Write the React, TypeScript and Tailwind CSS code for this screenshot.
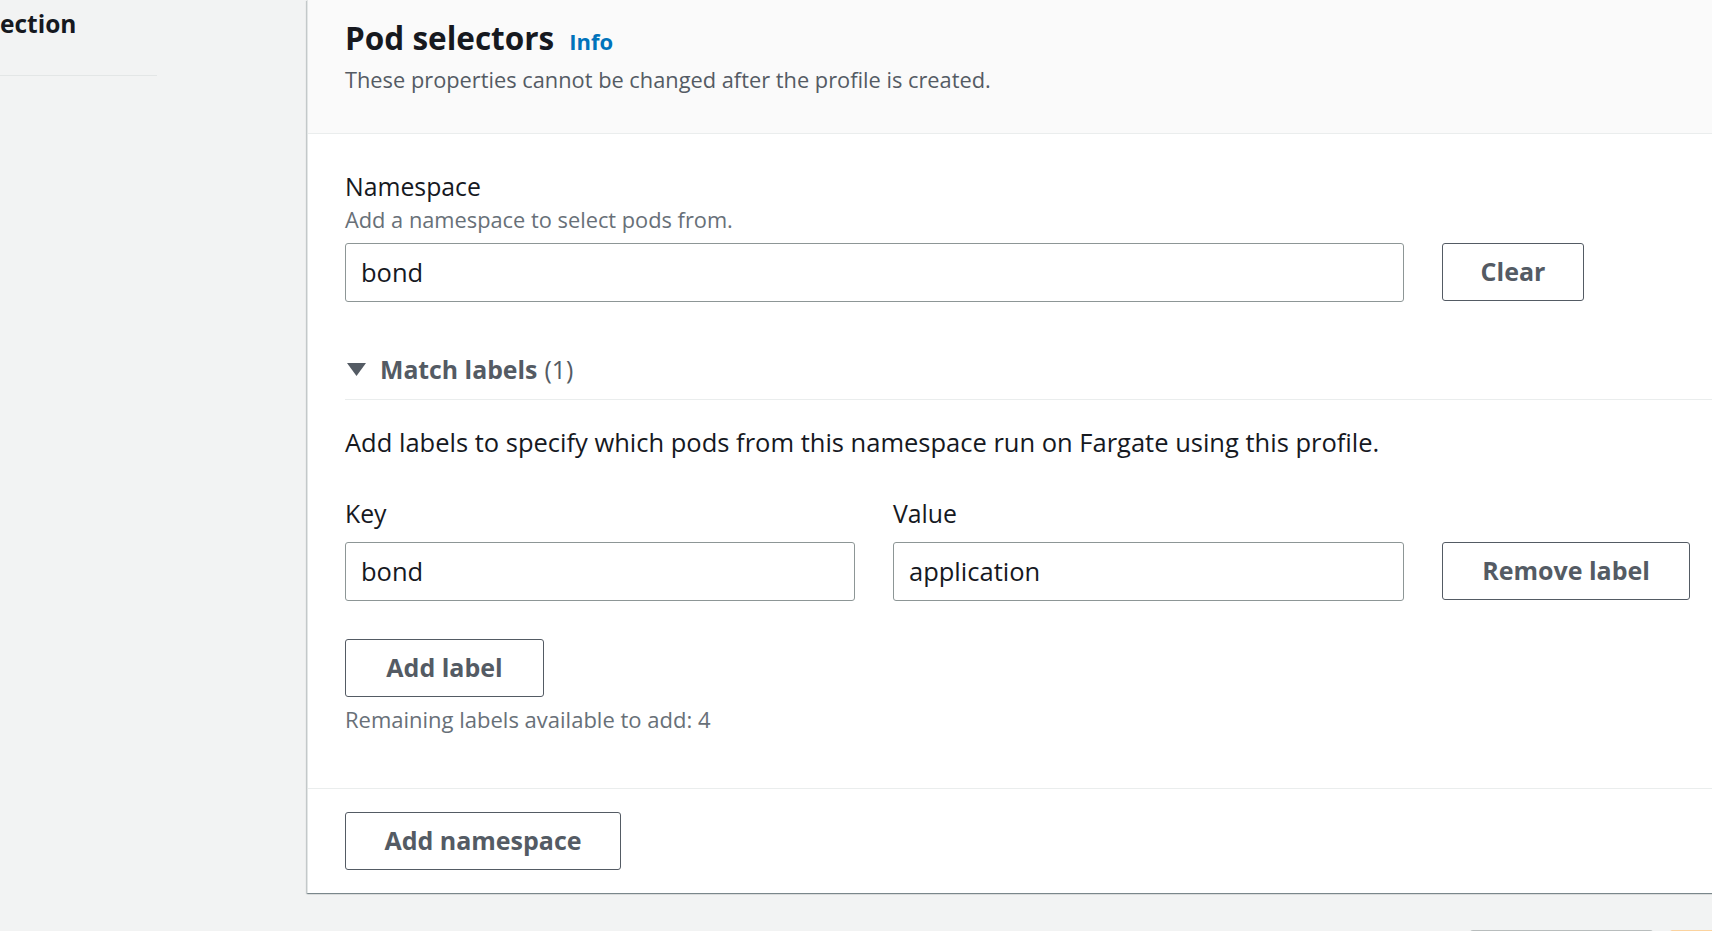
import React from "react";

const font = { fontFamily: '"Open Sans", "Noto Sans", sans-serif' };

function TextInput({ value, className }: { value: string; className?: string }) {
  return (
    <div
      className={`h-[59px] flex items-center px-[15px] bg-white border border-[#8d9696] rounded-[3px] text-[25.5px] text-[#16191f] ${className ?? ""}`}
    >
      {value}
    </div>
  );
}

function Button({ label, className }: { label: string; className?: string }) {
  return (
    <button
      className={`h-[58px] flex items-center justify-center bg-white border border-[#545b64] rounded-[3px] text-[25px] font-bold text-[#545b64] ${className ?? ""}`}
    >
      {label}
    </button>
  );
}

export default function App() {
  return (
    <div className="w-[1712px] h-[931px] overflow-hidden bg-[#f2f3f3] flex" style={font}>
      {/* Side nav (scrolled) */}
      <div className="w-[307px] shrink-0">
        <div className="pt-[8px] h-[40px] text-[24.5px] leading-[32px] font-bold text-[#16191f]">ection</div>
        <div className="mt-[35px] w-[157px] border-t border-[#e3e6e6]" />
      </div>

      {/* Main column */}
      <div className="flex-1 min-w-0 flex flex-col">
        <div className="bg-white border-l border-[#e3e6e6] shadow-[0_1px_1px_0_rgba(0,28,36,0.3),1px_1px_1px_0_rgba(0,28,36,0.15),-1px_1px_1px_0_rgba(0,28,36,0.15)] w-[1420px]">
          {/* Header */}
          <div className="bg-[#fafafa] border-b border-[#eaeded] pl-[37px] pt-[18px] pb-[39px]">
            <div className="flex items-baseline gap-[15px] h-[40px]">
              <h2 className="text-[31.5px] leading-[40px] font-bold text-[#16191f]">Pod selectors</h2>
              <a className="text-[22px] font-bold text-[#0073bb]">Info</a>
            </div>
            <p className="mt-[8px] text-[21.8px] leading-[28px] text-[#545b64]">
              These properties cannot be changed after the profile is created.
            </p>
          </div>

          {/* Body */}
          <div className="pl-[37px] pt-[36px] pb-[55px]">
            <div className="text-[24.8px] leading-[32px] text-[#16191f]">Namespace</div>
            <div className="mt-[4px] text-[21.8px] leading-[28px] text-[#687078]">Add a namespace to select pods from.</div>
            <div className="mt-[9px] flex items-start gap-[38px]">
              <TextInput value="bond" className="w-[1059px]" />
              <Button label="Clear" className="w-[142px]" />
            </div>

            {/* Match labels */}
            <div className="mt-[52px] flex items-center h-[32px]">
              <svg width="19" height="14" viewBox="0 0 19 14" className="ml-[2px] mr-[14px]">
                <path d="M0 0 H19 L9.5 13 Z" fill="#545b64" />
              </svg>
              <span className="text-[24.8px] font-bold text-[#545b64]">Match labels</span>
              <span className="ml-[7px] text-[24.8px] text-[#545b64]">(1)</span>
            </div>
            <div className="mt-[13px] border-t border-[#eaeded]" />

            <p className="mt-[25px] text-[25.5px] leading-[34px] text-[#16191f]">
              Add labels to specify which pods from this namespace run on Fargate using this profile.
            </p>

            <div className="mt-[38px] grid grid-cols-[510px_511px_248px] gap-x-[38px]">
              <div className="text-[24.8px] leading-[32px] text-[#16191f]">Key</div>
              <div className="text-[24.8px] leading-[32px] text-[#16191f]">Value</div>
              <div />
              <TextInput value="bond" className="mt-[13px]" />
              <TextInput value="application" className="mt-[13px]" />
              <Button label="Remove label" className="mt-[13px]" />
            </div>

            <Button label="Add label" className="mt-[38px] w-[199px]" />
            <div className="mt-[8px] text-[22px] leading-[28px] text-[#687078]">Remaining labels available to add: 4</div>
          </div>

          {/* Footer */}
          <div className="border-t border-[#eaeded] pl-[37px] pt-[23px] pb-[23px]">
            <Button label="Add namespace" className="w-[276px]" />
          </div>
        </div>

        {/* Wizard actions */}
        <div className="mt-[37px] flex gap-[17px] pl-[1163px]">
          <button className="h-[58px] w-[183px] shrink-0 bg-white border border-[#aab7b8] border-t-[#b8bdbd] rounded-[3px]" />
          <button className="h-[58px] w-[200px] shrink-0 bg-[#ec7211] border border-[#ec7211] border-t-[#fbd39f] rounded-[3px]" />
        </div>
      </div>
    </div>
  );
}
